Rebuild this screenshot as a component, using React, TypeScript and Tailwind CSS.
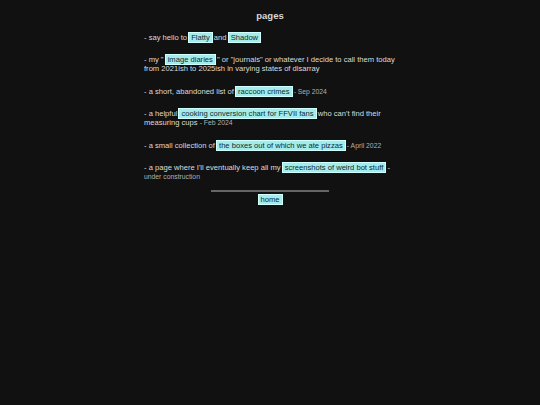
import React from "react";

function L({ children }: { children: React.ReactNode }) {
  return (
    <a
      href="#"
      className="bg-[#a4ecec] text-[#0d2a2a] px-[2px] outline outline-[0.5px] outline-[#d0ffff]"
    >
      {children}
    </a>
  );
}

function Note({ children }: { children: React.ReactNode }) {
  return <span className="text-[6.8px] text-[#b0b0b0]">{children}</span>;
}

export default function App() {
  return (
    <div
      className="min-h-screen bg-[#111111] text-[#dcdcdc] pt-[11px]"
      style={{ fontFamily: '"Liberation Sans", Arial, sans-serif' }}
    >
      <h1 className="text-center text-[9.5px] leading-[10px] font-bold text-[#d8d8d8]">
        pages
      </h1>

      <div className="w-[252px] mx-auto mt-[12.5px] text-[7.6px] leading-[8.5px]">
        <p className="mb-[14.3px]">
          - say hello to <L>Flatty</L> and <L>Shadow</L>
        </p>
        <p className="mb-[14.3px]">
          - my " <L>image diaries</L> " or "journals" or whatever I decide to
          call them today from 2021ish to 2025ish in varying states of disarray
        </p>
        <p className="mb-[14.3px]">
          - a short, abandoned list of <L>raccoon crimes</L>{" "}
          <Note>- Sep 2024</Note>
        </p>
        <p className="mb-[14.3px]">
          - a helpful <L>cooking conversion chart for FFVII fans</L> who can't
          find their measuring cups <Note>- Feb 2024</Note>
        </p>
        <p className="mb-[14.3px]">
          - a small collection of <L>the boxes out of which we ate pizzas</L>{" "}
          <Note>- April 2022</Note>
        </p>
        <p>
          - a page where I'll eventually keep all my{" "}
          <L>screenshots of weird bot stuff</L> -<br />
          <Note>under construction</Note>
        </p>
      </div>

      <div className="flex flex-col items-center mt-[8.5px] text-[7.6px] leading-[8.5px]">
        <div className="w-[118px] h-[2px] bg-[#666666]" />
        <div className="mt-[4px]">
          <L>home</L>
        </div>
      </div>
    </div>
  );
}
